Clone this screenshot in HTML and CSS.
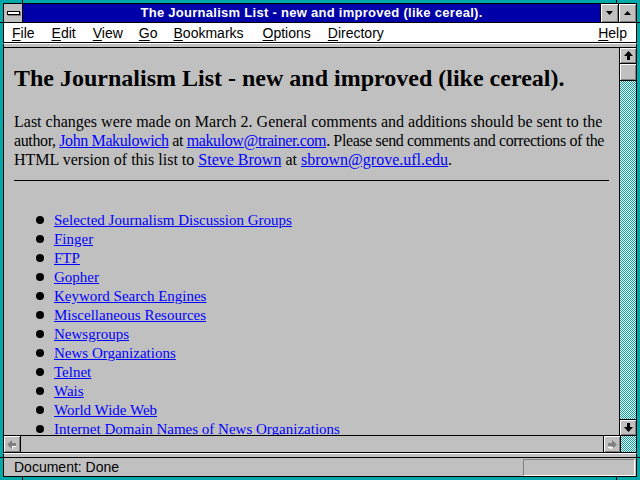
FILE: index.html
```html
<!DOCTYPE html>
<html lang="en">
<head>
  <meta charset="UTF-8">
  <title>The Journalism List - new and improved (like cereal).</title>
  <link rel="stylesheet" href="styles.css">
</head>
<body>
  <div class="window">
    <div class="titlebar">
      <div class="sysmenu"><span class="sysbar"></span></div>
      <div class="title">The Journalism List - new and improved (like cereal).</div>
      <div class="tbtn">
        <svg width="9" height="5" viewBox="0 0 9 5"><path d="M1 0h7L4.5 4z" fill="#000"/></svg>
      </div>
      <div class="tbtn">
        <svg width="9" height="5" viewBox="0 0 9 5"><path d="M4.5 0L8 4H1z" fill="#000"/></svg>
      </div>
    </div>

    <div class="menubar">
      <span class="mi m-file"><u>F</u>ile</span>
      <span class="mi m-edit"><u>E</u>dit</span>
      <span class="mi m-view"><u>V</u>iew</span>
      <span class="mi m-go"><u>G</u>o</span>
      <span class="mi m-book"><u>B</u>ookmarks</span>
      <span class="mi m-opt"><u>O</u>ptions</span>
      <span class="mi m-dir"><u>D</u>irectory</span>
      <span class="spacer"></span>
      <span class="mi m-help"><u>H</u>elp</span>
    </div>
    <div class="toolsep"></div>

    <div class="viewport">
      <div class="page">
        <h1>The Journalism List - new and improved (like cereal).</h1>
        <p>
          <span class="line">Last changes were made on March 2. General comments and additions should be sent to the</span>
          <span class="line tight">author, <a href="#">John Makulowich</a> at <a href="#">makulow@trainer.com</a>. Please send comments and corrections of the</span>
          <span class="line">HTML version of this list to <a href="#">Steve Brown</a> at <a href="#">sbrown@grove.ufl.edu</a>.</span>
        </p>
        <hr>
        <ul class="links">
          <li><a href="#">Selected Journalism Discussion Groups</a></li>
          <li><a href="#">Finger</a></li>
          <li><a href="#">FTP</a></li>
          <li><a href="#">Gopher</a></li>
          <li><a href="#">Keyword Search Engines</a></li>
          <li><a href="#">Miscellaneous Resources</a></li>
          <li><a href="#">Newsgroups</a></li>
          <li><a href="#">News Organizations</a></li>
          <li><a href="#">Telnet</a></li>
          <li><a href="#">Wais</a></li>
          <li><a href="#">World Wide Web</a></li>
          <li><a href="#">Internet Domain Names of News Organizations</a></li>
        </ul>
      </div>
      <div class="vscroll">
        <div class="sbtn">
          <svg width="9" height="9" viewBox="0 0 9 9"><path d="M4.5 0L9 5H6v4H3V5H0z" fill="#000"/></svg>
        </div>
        <div class="thumb"></div>
        <div class="track"></div>
        <div class="sbtn sbtn-down">
          <svg width="9" height="9" viewBox="0 0 9 9"><path d="M3 0h3v4h3L4.5 9 0 4h3z" fill="#000"/></svg>
        </div>
      </div>
    </div>

    <div class="hscroll">
      <div class="sbtn hbtn">
        <svg width="10" height="9" viewBox="0 0 10 9"><path d="M0 4.5L5 0v3h4v3H5v3z" fill="#808080"/><path d="M5 9V6h4v1H6v2z" fill="#fff"/></svg>
      </div>
      <div class="htrack"></div>
      <div class="sbtn hbtn hbtn-right">
        <svg width="10" height="9" viewBox="0 0 10 9"><path d="M10 4.5L5 0v3H1v3h4v3z" fill="#808080"/><path d="M5 9l1-1V7H1v1z" fill="#fff"/></svg>
      </div>
      <div class="corner"></div>
    </div>
    <div class="toolsep"></div>

    <div class="status">
      <span class="status-text">Document: Done</span>
      <div class="progress"></div>
    </div>
  </div>
</body>
</html>
```

FILE: styles.css
```css
html, body {
  margin: 0;
  padding: 0;
  background: #00a8a8;
}
/* frame with the little resize corner ticks */
.window {
  width: 640px;
  height: 480px;
  box-sizing: border-box;
  border: 3px solid transparent;
  background:
    linear-gradient(#000, #000) 22px 0 / 1px 3px no-repeat,
    linear-gradient(#000, #000) 616px 0 / 1px 3px no-repeat,
    linear-gradient(#000, #000) 22px 477px / 1px 3px no-repeat,
    linear-gradient(#000, #000) 616px 477px / 1px 3px no-repeat,
    linear-gradient(#000, #000) 0 22px / 3px 1px no-repeat,
    linear-gradient(#000, #000) 0 457px / 3px 1px no-repeat,
    linear-gradient(#000, #000) 637px 22px / 3px 1px no-repeat,
    linear-gradient(#000, #000) 637px 457px / 3px 1px no-repeat,
    #00a8a8;
  background-origin: border-box;
  display: flex;
  flex-direction: column;
  font-family: 'Liberation Sans', Arial, sans-serif;
  font-size: 13px;
}
.window > * {
  border-left: 1px solid #000;
  border-right: 1px solid #000;
  flex: none;
}

/* title bar */
.titlebar {
  height: 18px;
  display: flex;
  background: #0000a8;
  border-top: 1px solid #000;
  border-bottom: 1px solid #000;
}
.sysmenu {
  width: 18px;
  background: #c0c0c0;
  border-right: 1px solid #000;
  display: flex;
  align-items: center;
  justify-content: center;
}
.sysbar {
  width: 11px;
  height: 2px;
  background: #fff;
  border: 1px solid #000;
  box-shadow: 1px 1px 0 #808080;
}
.title {
  flex: 1;
  color: #fff;
  font-weight: bold;
  text-align: center;
  line-height: 18px;
  letter-spacing: 0.28px;
}
.tbtn {
  width: 17px;
  background: #c0c0c0;
  border-left: 1px solid #000;
  box-shadow: inset 1px 1px 0 #fff, inset -1px -1px 0 #808080;
  display: flex;
  align-items: center;
  justify-content: center;
}

/* menu */
.menubar {
  height: 19px;
  background: #fff;
  border-bottom: 1px solid #000;
  display: flex;
  align-items: center;
  color: #000;
  font-size: 14px;
}
.mi u {
  text-decoration: underline;
  text-underline-offset: 2px;
}
.m-file { margin-left: 8px; }
.m-edit { margin-left: 17px; }
.m-view { margin-left: 17px; }
.m-go { margin-left: 16px; }
.m-book { margin-left: 16px; }
.m-opt { margin-left: 19px; }
.m-dir { margin-left: 17px; }
.m-help { margin-right: 9px; }
.spacer { flex: 1; }

.toolsep {
  height: 3px;
  background: #c0c0c0;
  border-top: 1px solid #fff;
  border-bottom: 1px solid #000;
}

/* page area */
.window > .viewport {
  flex: 1;
  display: flex;
  min-height: 0;
  background: #c0c0c0;
}
.page {
  flex: 1;
  padding: 0 10px 0 10px;
  overflow: hidden;
  font-family: 'Liberation Serif', 'Times New Roman', serif;
  font-size: 16px;
  line-height: 19px;
  color: #000;
}
h1 {
  font-size: 24px;
  line-height: 28px;
  margin: 16px 0 20px 0;
}
p {
  margin: 0;
}
.line {
  display: block;
  white-space: nowrap;
}
.tight {
  letter-spacing: -0.38px;
}
a {
  color: #0000ff;
  text-decoration: underline;
}
hr {
  border: none;
  border-top: 1px solid #000;
  margin: 11px 0 0 0;
  height: 0;
}
.links {
  list-style: none;
  margin: 30px 0 0 0;
  padding: 0 0 0 22px;
  font-size: 15px;
}
.links li::before {
  content: "";
  display: inline-block;
  width: 8px;
  height: 8px;
  border-radius: 50%;
  background: #000;
  margin-right: 10px;
  vertical-align: 1px;
}

/* scrollbars */
.vscroll {
  width: 16px;
  border-left: 1px solid #000;
  display: flex;
  flex-direction: column;
}
.sbtn {
  height: 15px;
  background: #c0c0c0;
  border-bottom: 1px solid #000;
  box-shadow: inset 1px 1px 0 #fff, inset -1px -1px 0 #808080;
  display: flex;
  align-items: center;
  justify-content: center;
}
.sbtn-down {
  border-bottom: none;
  border-top: 1px solid #000;
}
.thumb {
  height: 16px;
  background: #c0c0c0;
  border-bottom: 1px solid #000;
  box-shadow: inset 1px 1px 0 #fff, inset -1px -1px 0 #808080;
}
.track, .corner {
  flex: 1;
  background: repeating-conic-gradient(#00a8a8 0 25%, #fff 0 50%) 0 0 / 2px 2px;
}
.hscroll {
  height: 16px;
  display: flex;
  border-top: 1px solid #000;
  border-bottom: 1px solid #000;
  background: #c0c0c0;
}
.hbtn {
  width: 16px;
  height: auto;
  border-bottom: none;
  border-right: 1px solid #000;
}
.hbtn-right {
  border-left: 1px solid #000;
}
.htrack {
  flex: 1;
}
.corner {
  flex: none;
  width: 15px;
}

/* status bar */
.status {
  height: 18px;
  background: #c0c0c0;
  border-bottom: 1px solid #000;
  display: flex;
  align-items: center;
  padding: 0 1px 0 10px;
}
.status-text {
  flex: 1;
  font-size: 14px;
  color: #000;
}
.progress {
  width: 110px;
  height: 15px;
  border-top: 1px solid #808080;
  border-left: 1px solid #808080;
  border-right: 1px solid #fff;
  border-bottom: 1px solid #fff;
}
```
